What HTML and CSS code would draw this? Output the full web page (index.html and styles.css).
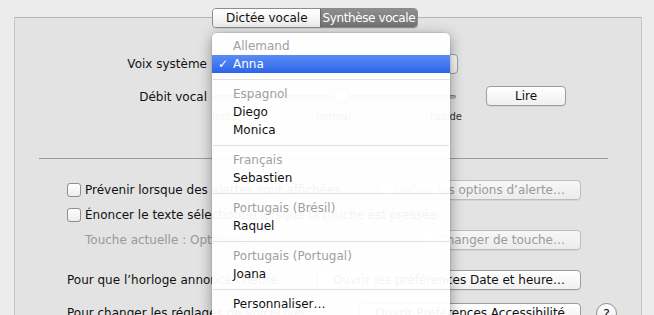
FILE: index.html
```html
<!DOCTYPE html>
<html>
<head>
    <meta charset="utf-8">
    <link rel="stylesheet" href="styles.css">
</head>
<body>
    <div class="panel">
        <div class="tabs">
            <span class="tab">Dictée vocale</span>
            <span class="tab tab-on">Synthèse vocale</span>
        </div>

        <!-- voix + débit -->
        <div class="field voice-row">
            <span class="label">Voix système</span>
            <div class="popup"></div>
        </div>
        <div class="field rate-row">
            <span class="label">Débit vocal</span>
            <div class="slider">
                <div class="track"><span class="thumb"></span></div>
                <div class="ticks"><i></i><i></i><i></i><i></i><i></i></div>
                <div class="marks"><span>lente</span><span>normal</span><span>rapide</span></div>
            </div>
            <button class="btn lire">Lire</button>
        </div>

        <hr class="sep">

        <div class="options">
            <div class="opt">
                <label class="check"><span class="box"></span>Prévenir lorsque des alertes sont affichées</label>
                <button class="btn" disabled>Définir les options d’alerte…</button>
            </div>
            <div class="opt">
                <label class="check"><span class="box"></span>Énoncer le texte sélectionné lorsque la touche est pressée</label>
            </div>
            <div class="opt">
                <span class="muted">Touche actuelle : Option+Esc</span>
                <button class="btn" disabled>Changer de touche…</button>
            </div>
            <div class="opt spaced">
                <span class="text">Pour que l’horloge annonce l’heure :</span>
                <button class="btn">Ouvrir les préférences Date et heure…</button>
            </div>
            <div class="opt last">
                <span class="text">Pour changer les réglages de VoiceOver :</span>
                <button class="btn">Ouvrir Préférences Accessibilité</button>
                <span class="help">?</span>
            </div>
        </div>
    </div>

    <!-- menu déroulant des voix -->
    <div class="menu">
        <div class="item head">Allemand</div>
        <div class="item picked"><span class="tick">✓</span>Anna</div>
        <div class="menu-sep"></div>
        <div class="item head">Espagnol</div>
        <div class="item">Diego</div>
        <div class="item">Monica</div>
        <div class="menu-sep"></div>
        <div class="item head">Français</div>
        <div class="item">Sebastien</div>
        <div class="menu-sep"></div>
        <div class="item head">Portugais (Brésil)</div>
        <div class="item">Raquel</div>
        <div class="menu-sep"></div>
        <div class="item head">Portugais (Portugal)</div>
        <div class="item">Joana</div>
        <div class="menu-sep"></div>
        <div class="item">Personnaliser…</div>
    </div>
</body>
</html>
```

FILE: styles.css
```css
body {
    margin: 0;
    background: #ececec;
    font-family: "DejaVu Sans", "Liberation Sans", sans-serif;
    font-size: 12px;
    color: #111;
    overflow: hidden;
    height: 315px;
}

.panel {
    margin: 17px 12px 0 14px;
    height: 298px;
    background: #e3e3e3;
    border: 1px solid #c6c6c6;
    border-top-color: #b4b4b4;
    border-bottom: 0;
    box-sizing: border-box;
}

/* onglets */
.tabs {
    display: flex;
    width: max-content;
    margin: -10px 0 0 197px;
    border: 1px solid #8c8c8c;
    border-radius: 4px;
    overflow: hidden;
    height: 18px;
    box-shadow: 0 1px 0 rgba(0, 0, 0, 0.08);
}
.tab {
    padding: 0 12px 0 13px;
    line-height: 18px;
    text-align: center;
    background: linear-gradient(#ffffff, #ececec);
    color: #111;
    white-space: nowrap;
}
.tab-on {
    padding: 0 2px;
    letter-spacing: -0.4px;
    border-left: 1px solid #6a6a6a;
    background: linear-gradient(#8e8e8e, #727272);
    color: #fff;
}

.field {
    display: flex;
}
.label {
    width: 192px;
    margin-right: 5px;
    text-align: right;
}
.voice-row {
    margin-top: 26px;
    align-items: center;
    height: 20px;
}
.popup {
    width: 246px;
    height: 20px;
    box-sizing: border-box;
    border: 1px solid #9d9d9d;
    border-radius: 4px;
    background: linear-gradient(#ffffff, #efefef);
}

.rate-row {
    margin-top: 12px;
    height: 40px;
    align-items: flex-start;
}
.rate-row .label {
    line-height: 22px;
}
.slider {
    width: 250px;
}
.track {
    position: relative;
    margin: 9px 6px 0 0;
    height: 4px;
    border-radius: 2px;
    background: #b0b0b0;
    box-shadow: inset 0 1px 1px rgba(0, 0, 0, 0.3);
}
.thumb {
    position: absolute;
    left: 121px;
    top: -6px;
    width: 14px;
    height: 12px;
    border: 1px solid #8d8d8d;
    border-radius: 3px 3px 7px 7px;
    background: linear-gradient(#ffffff, #e8e8e8);
}
.ticks {
    display: flex;
    justify-content: space-between;
    margin: 4px 13px 0 7px;
    height: 5px;
}
.ticks i {
    width: 1px;
    background: #8d8d8d;
}
.marks {
    display: flex;
    justify-content: space-between;
    margin-top: 3px;
    font-size: 10px;
    color: #333;
}

.btn {
    font-family: inherit;
    font-size: 12px;
    color: #111;
    height: 20px;
    padding: 0 15px;
    border: 1px solid #9d9d9d;
    border-radius: 4px;
    background: linear-gradient(#ffffff, #f0f0f0);
    box-shadow: 0 1px 0 rgba(0, 0, 0, 0.06);
    white-space: nowrap;
}
.btn:disabled {
    color: #9a9a9a;
    border-color: #bdbdbd;
    background: linear-gradient(#f7f7f7, #ececec);
}
.lire {
    width: 80px;
    margin-left: 24px;
}

.sep {
    border: 0;
    border-top: 1px solid #9b9b9b;
    margin: 32px 33px 0 24px;
    height: 0;
}

.options {
    padding: 0 24px 0 52px;
}
.opt {
    display: flex;
    align-items: center;
    height: 20px;
    margin-top: 5px;
}
.opt:first-child {
    margin-top: 21px;
}
.opt.spaced {
    margin-top: 20px;
}
.opt.last {
    margin-top: 13px;
}
.opt .btn {
    margin-left: auto;
    margin-right: 36px;
}
.opt.last .btn {
    margin-right: 15px;
}
.check {
    display: flex;
    align-items: center;
}
.box {
    width: 14px;
    height: 14px;
    box-sizing: border-box;
    border: 1px solid #8e8e8e;
    border-radius: 3px;
    background: linear-gradient(#ffffff, #ededed);
    margin-right: 4px;
}
.muted {
    color: #999;
    padding-left: 18px;
}
.help {
    width: 21px;
    height: 21px;
    box-sizing: border-box;
    border: 1px solid #8a8a8a;
    border-radius: 50%;
    background: linear-gradient(#ffffff, #ececec);
    text-align: center;
    line-height: 19px;
    font-size: 13px;
}

/* menu */
.menu {
    position: absolute;
    left: 212px;
    top: 33px;
    width: 238px;
    height: 278px;
    padding-top: 4px;
    background: rgba(255, 255, 255, 0.95);
    border-radius: 5px 5px 0 0;
    box-shadow: 0 3px 14px rgba(0, 0, 0, 0.38), 0 0 0 1px rgba(0, 0, 0, 0.06);
}
.item {
    height: 18px;
    line-height: 18px;
    padding-left: 21px;
    color: #111;
}
.item.head {
    color: #a0a0a0;
}
.item.picked {
    padding-left: 6px;
    color: #fff;
    background: linear-gradient(#5b8df6, #2c64e8);
}
.tick {
    display: inline-block;
    width: 15px;
}
.menu-sep {
    height: 1px;
    margin: 6px 1px 5px;
    background: #e0e0e0;
}
```
